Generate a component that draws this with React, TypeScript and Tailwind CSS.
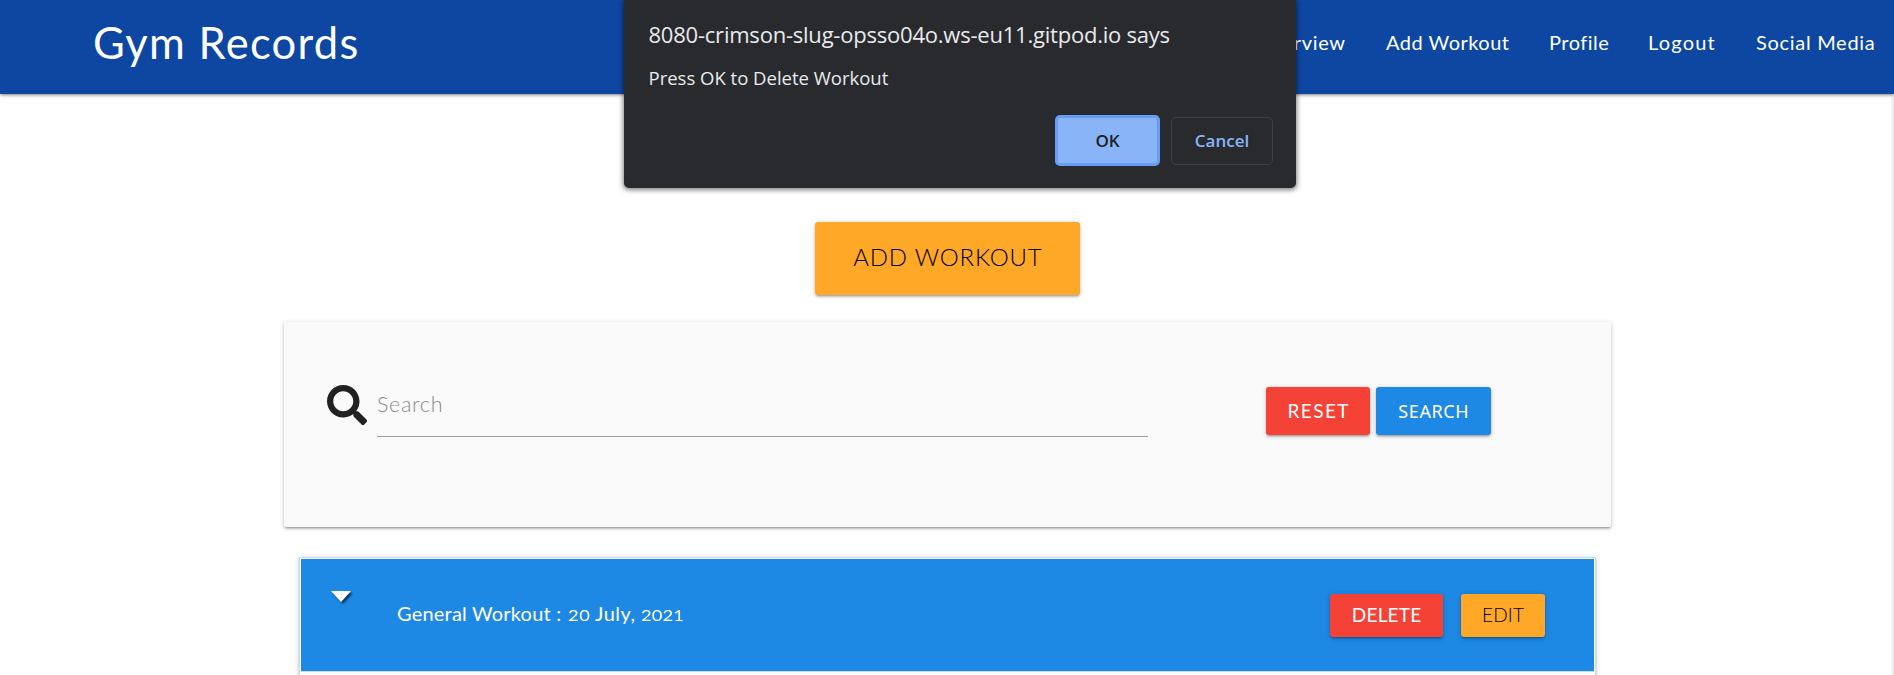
import { FaSearch } from "react-icons/fa";

const shadow =
  "shadow-[0_2px_2px_0_rgba(0,0,0,0.14),0_3px_1px_-2px_rgba(0,0,0,0.12),0_1px_5px_0_rgba(0,0,0,0.2)]";
const btn = `flex shrink-0 items-center justify-center rounded-[3px] whitespace-nowrap ${shadow}`;

export default function App() {
  return (
    <div className="relative h-[675px] w-full overflow-hidden bg-white font-['Lato',sans-serif] text-[20px] text-black/90">
      <nav className={`flex h-[94px] items-center justify-between bg-[#0d47a1] pl-[93px] text-white ${shadow}`}>
        <a className="pb-[9px] text-[43.5px] leading-none tracking-[1.3px]">Gym Records</a>
        <ul className="flex pb-[10px] whitespace-nowrap">
          <li className="w-[131px] pl-5 tracking-[0.7px]">Overview</li>
          <li className="w-[163px] pl-5 tracking-[0.5px]">Add Workout</li>
          <li className="w-[99px] pl-5 tracking-[0.5px]">Profile</li>
          <li className="w-[108px] pl-5 tracking-[1.2px]">Logout</li>
          <li className="w-[158px] pl-5 tracking-[0.7px]">Social Media</li>
        </ul>
      </nav>

      <main className="flex flex-col items-center pt-32">
        <a className={`${btn} ml-px h-[73px] w-[265px] bg-[#ffa726] pb-[3px] text-[24px] font-light text-black`}>
          <span className="-mr-[0.8px] tracking-[0.8px]">ADD WORKOUT</span>
        </a>

        <form className={`mt-[27px] ml-px flex h-[205px] w-[1327px] items-start rounded-[2px] bg-[#fafafa] pl-[43px] ${shadow}`}>
          <FaSearch className="mt-[63px] size-10 text-[#212121]" />
          <label className="mt-[55px] ml-[10px] flex h-[60px] w-[771px] items-center border-b border-[#9e9e9e] pb-1 text-[21.5px] font-light text-[#8a8a8a]">
            <span className="tracking-[0.7px]">Search</span>
          </label>
          <div className="mt-[65px] ml-[118px] flex gap-[6px] text-white">
            <button type="button" className={`${btn} h-12 w-[104px] bg-[#f44336] text-[19px]`}>
              <span className="-mr-[1.4px] tracking-[1.4px]">RESET</span>
            </button>
            <button type="button" className={`${btn} h-12 w-[115px] bg-[#1e88e5] font-['Noto_Sans',sans-serif] text-[18px]`}>
              <span className="-mr-[0.6px] tracking-[0.6px]">SEARCH</span>
            </button>
          </div>
        </form>

        <section className={`mt-[30px] ml-px h-[200px] w-[1297px] shrink-0 border border-[#c4dff5] p-px ${shadow}`}>
          <div className="flex h-[113px] items-start border-b border-[#c4dff5] bg-[#1e88e5] pl-[30px] text-white">
            <svg className="mt-8 h-[11px] w-5 overflow-visible drop-shadow-[2px_2px_1px_rgba(0,0,0,0.6)]" viewBox="0 0 20 11" fill="#fff">
              <path d="M0 0H20L10 11Z" />
            </svg>
            <p className="mt-[39px] ml-[46px] flex flex-1 items-baseline whitespace-pre">
              <span className="w-[171px] tracking-[0.2px]">General Workout :</span>
              <span className="w-[27px] origin-[0_78%] scale-y-[0.82] text-[18.5px] tracking-[0.5px]">20</span>
              <span className="w-[46px] tracking-[0.5px]">July,</span>
              <span className="origin-[0_78%] scale-y-[0.82] text-[18.5px]">2021</span>
            </p>
            <div className="mt-[35px] mr-[49px] flex gap-[18px] text-[19px]">
              <button type="button" className={`${btn} h-[43px] w-[113px] bg-[#f44336] pb-px`}>
                <span className="-mr-[0.2px] tracking-[0.2px]">DELETE</span>
              </button>
              <button type="button" className={`${btn} h-[43px] w-[84px] bg-[#ffa726] pb-px font-light text-black`}>
                <span className="-mr-[0.2px] tracking-[0.2px]">EDIT</span>
              </button>
            </div>
          </div>
        </section>
      </main>

      <div className="absolute top-[94px] right-0 h-full w-[4px] bg-linear-to-r from-transparent to-black/10" />

      <div
        role="dialog"
        className="absolute top-0 left-[624px] flex h-[188px] w-[672px] flex-col rounded-b-[5px] bg-[#292a2d] px-6 font-['Open_Sans',sans-serif] text-[#e8eaed] shadow-[0_1px_5px_1px_rgba(0,0,0,0.5)]"
      >
        <h2 className="mt-[19px] ml-[0.5px] text-[22px] leading-[30px] tracking-[-0.22px]">
          8080-crimson-slug-opsso04o.ws-eu11.gitpod.io says
        </h2>
        <p className="mt-[17px] ml-[0.5px] text-[18.5px] leading-6">Press OK to Delete Workout</p>
        <div className="mt-[25px] -mr-px flex items-center justify-end gap-[11px] text-[17px] font-semibold">
          <button className="h-[51px] w-[105px] rounded-[5px] border-[3px] border-[#669df6] bg-[#8ab4f8] text-[#202124]">
            OK
          </button>
          <button className="h-12 w-[102px] rounded-[5px] border border-[#3c4043] text-[#8ab4f8]">Cancel</button>
        </div>
      </div>
    </div>
  );
}
